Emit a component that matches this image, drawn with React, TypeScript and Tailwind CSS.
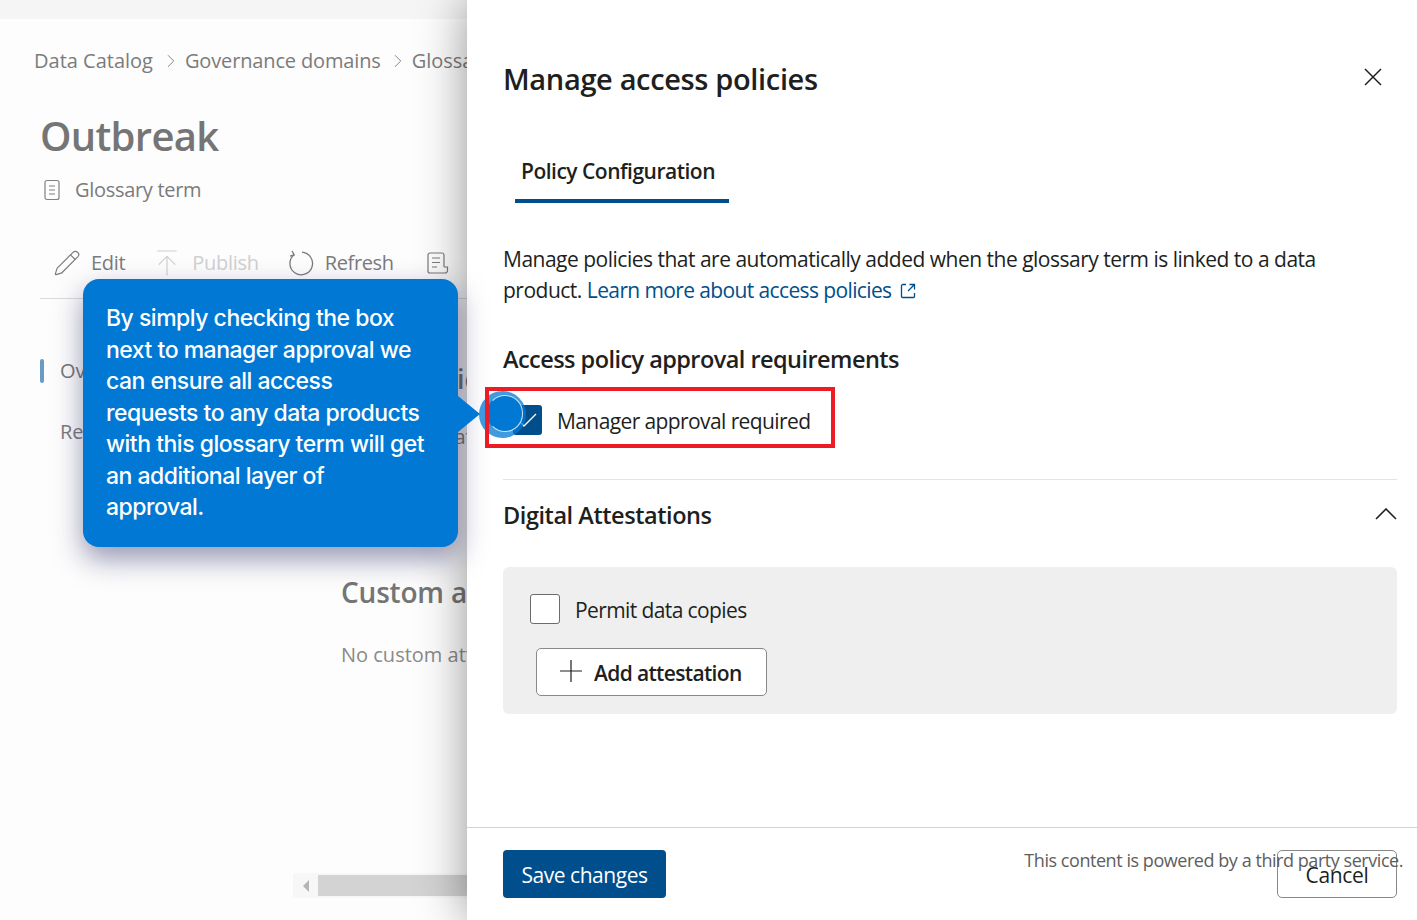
import { ChevronRight, Pencil, ArrowUpToLine } from "lucide-react";

function GlossaryIcon() {
  return (
    <svg width="16" height="22" viewBox="0 0 16 22" fill="none" stroke="#808080" strokeWidth="1.2">
      <rect x="1" y="1.5" width="14" height="19" rx="2" />
      <path d="M5 7h6M5 11h6M5 15h6" />
    </svg>
  );
}

function RefreshIcon() {
  return (
    <svg width="26" height="26" viewBox="0 0 26 26" fill="none" stroke="#7b7b7b" strokeWidth="1.3" className="ml-[29px] shrink-0">
      <path d="M14 2.2a11.3 11.3 0 1 1-8 2.6" />
      <path d="M4 1l2.2 3.9L2 6.2" />
    </svg>
  );
}

function TermDocIcon() {
  return (
    <svg width="22" height="22" viewBox="0 0 22 22" fill="none" stroke="#7b7b7b" strokeWidth="1.2" className="ml-[33px] shrink-0">
      <path d="M17 15V3a2 2 0 0 0-2-2H3a2 2 0 0 0-2 2v16a2 2 0 0 0 2 2h15a2.5 2.5 0 0 0 2.5-2.5V15H17" />
      <path d="M5 6h8M5 10.500h8M5 15h5" />
    </svg>
  );
}

function LeftPanel() {
  return (
    <div className="flex flex-col w-[467px] h-full shrink-0 overflow-hidden bg-[#fdfdfd] font-['Open_Sans',sans-serif]">
      <div className="h-[19px] bg-[#f5f5f5]" />
      <div className="flex items-center pl-[34px] mt-[27px] h-[30px] text-[20px] text-[#7b7b7b] whitespace-nowrap">
        <span>Data Catalog</span>
        <ChevronRight size={22} strokeWidth={1} className="ml-[7px] mr-[3px] shrink-0" />
        <span className="tracking-[-0.15px]">Governance domains</span>
        <ChevronRight size={22} strokeWidth={1} className="ml-[6px] mr-[3px] shrink-0" />
        <span>Glossary terms</span>
      </div>
      <h1 className="pl-[40px] mt-[35px] h-[50px] leading-[50px] text-[40px] font-semibold text-[#757575] tracking-[-0.7px]">Outbreak</h1>
      <div className="flex items-center gap-[15px] pl-[44px] mt-[15px] h-[28px] text-[20px] text-[#7b7b7b] tracking-[-0.3px]">
        <GlossaryIcon />
        <span>Glossary term</span>
      </div>
      <div className="flex items-center pl-[53px] mt-[41px] h-[36px] text-[20px] text-[#7b7b7b] whitespace-nowrap tracking-[-0.3px]">
        <Pencil size={28} strokeWidth={1} className="shrink-0" />
        <span className="ml-[10px]">Edit</span>
        <ArrowUpToLine size={32} strokeWidth={0.9} className="ml-[26px] shrink-0 text-[#d0d0d0]" />
        <span className="ml-[9px] text-[#d0d0d0]">Publish</span>
        <RefreshIcon />
        <span className="ml-[11px] tracking-[-0.35px]">Refresh</span>
        <TermDocIcon />
      </div>
      <div className="ml-[40px] mt-[17px] border-t border-[#dcdcdc]" />
      <div className="flex mt-[60px]">
        <div className="w-[341px] shrink-0 pl-[40px]">
          <div className="flex items-center gap-[16px] h-[24px] text-[20px] text-[#757575]">
            <div className="w-[4px] h-[24px] rounded-sm bg-[#6a9bc3]" />
            <span>Overview</span>
          </div>
          <div className="pl-[20px] mt-[34px] text-[20px] text-[#7b7b7b]">Related</div>
        </div>
        <div className="whitespace-nowrap">
          <div className="text-[27px] font-semibold text-[#757575] leading-[40px]">Term policy</div>
          <div className="text-[20px] text-[#7b7b7b] mt-[23px] tracking-[-0.2px]">No related data</div>
          <div className="text-[28px] font-semibold text-[#757575] leading-[40px] mt-[120px] tracking-[-0.2px]">Custom attributes</div>
          <div className="text-[20px] text-[#8a8a8a] mt-[28px]">No custom attributes</div>
        </div>
      </div>
      <div className="flex h-[25px] mt-auto mb-[22px] ml-[293px] bg-[#f7f7f7] items-center">
        <div className="w-[25px] flex justify-center">
          <div className="w-0 h-0 border-y-[6px] border-y-transparent border-r-[6px] border-r-[#b5b5b5]" />
        </div>
        <div className="flex-1 h-[21px] bg-[#d3d3d3]" />
      </div>
    </div>
  );
}

function RightPanel() {
  return (
    <div className="relative z-10 flex-1 h-full flex flex-col bg-white text-[#201f1e] shadow-[0_0_45px_rgba(0,0,0,0.42)] font-['Open_Sans',sans-serif]">
      <div className="flex-1 pl-[36px] pr-[20px]">
        <div className="flex items-center justify-between h-[40px] mt-[59px] pr-[15px]">
          <h2 className="text-[29px] font-semibold tracking-[-0.35px]">Manage access policies</h2>
          <svg width="18" height="18" viewBox="0 0 18 18" stroke="#201f1e" strokeWidth="1.5" className="-mt-[4px]">
            <path d="M1 1l16 16M17 1L1 17" />
          </svg>
        </div>
        <div className="mt-[41px] ml-[12px] w-[214px] h-[63px] border-b-[4px] border-[#004e8c] pl-[6px] text-[21px] font-semibold tracking-[-0.5px] leading-[62px]">
          Policy Configuration
        </div>
        <p className="mt-[41px] text-[21px] leading-[31px] tracking-[-0.5px] whitespace-nowrap">
          Manage policies that are automatically added when the glossary term is linked to a data
          <br />
          product.{" "}
          <span className="text-[#004e8c] tracking-[-0.62px]">Learn more about access policies</span>
          <svg width="16" height="16" viewBox="0 0 16 16" fill="none" stroke="#004e8c" strokeWidth="1.3" className="inline ml-[8px] -mt-[3px]">
            <path d="M6 1.500H2.500a1.500 1.500 0 0 0-1 1V13.500a1 1 0 0 0 1 1h11a1 1 0 0 0 1-1V10" />
            <path d="M9.500 1.500h5v5M14.500 1.500L8 8" />
          </svg>
        </p>
        <h3 className="mt-[37px] text-[23.5px] font-semibold tracking-[-0.55px] leading-[32px]">Access policy approval requirements</h3>
        <div className="flex items-center gap-[15px] mt-[30px] ml-[10px] h-[30px]">
          <div className="w-[29px] h-[30px] rounded-[3px] bg-[#004e8c] flex items-center justify-center">
            <svg width="20" height="14" viewBox="0 0 20 14" fill="none" stroke="#ffffff" strokeWidth="1.4" className="-ml-[2px]">
              <path d="M1 7l6 6L19 1" />
            </svg>
          </div>
          <span className="text-[21px] tracking-[-0.6px] pt-[3px]">Manager approval required</span>
        </div>
        <div className="mt-[44px] border-t border-[#e3e3e3]" />
        <div className="flex items-center justify-between h-[36px] mt-[18px]">
          <h3 className="text-[23.5px] font-semibold tracking-[-0.45px]">Digital Attestations</h3>
          <svg width="22" height="12" viewBox="0 0 22 12" fill="none" stroke="#201f1e" strokeWidth="1.6" className="-mt-[4px]">
            <path d="M1 11L11 1l10 10" />
          </svg>
        </div>
        <div className="mt-[33px] h-[147px] rounded-[6px] bg-[#efefef] pl-[27px] pt-[25px]">
          <div className="flex items-center gap-[15px]">
            <div className="w-[30px] h-[30px] rounded-[3px] bg-white border border-[#6b6b6b]" />
            <span className="text-[21px] tracking-[-0.6px] pt-[3px]">Permit data copies</span>
          </div>
          <button className="flex items-center mt-[21px] ml-[6px] w-[231px] h-[48px] rounded-[5px] bg-white border border-[#8a8886] pl-[23px] text-[21px] font-semibold tracking-[-0.65px]">
            <svg width="22" height="22" viewBox="0 0 22 22" stroke="#201f1e" strokeWidth="1.2" className="shrink-0 -mt-[2px]">
              <path d="M11 0v22M0 11h22" />
            </svg>
            <span className="ml-[12px] pt-[4px]">Add attestation</span>
          </button>
        </div>
      </div>
      <div className="relative h-[93px] shrink-0 border-t border-[#d2d2d2] flex items-start justify-between pl-[36px] pr-[20px] pt-[22px]">
        <button className="w-[163px] h-[48px] rounded-[4px] bg-[#004e8c] text-white text-[21px] tracking-[-0.45px] pt-[4px]">Save changes</button>
        <button className="w-[120px] h-[48px] rounded-[5px] border border-[#8a8886] text-[21px] tracking-[-0.35px] pt-[4px]">Cancel</button>
        <div className="absolute right-[14px] top-[19px] text-[18px] text-[#605e5c] tracking-[-0.45px] whitespace-nowrap">
          This content is powered by a third party service.
        </div>
      </div>
    </div>
  );
}

export default function App() {
  return (
    <div className="relative flex w-[1417px] h-[920px] overflow-hidden bg-white">
      <LeftPanel />
      <RightPanel />
      {/* coach mark over the panels */}
      <div className="absolute z-20 left-[83px] top-[279px] w-[375px] h-[268px] rounded-[16px] bg-[#0078d4] pl-[23px] pt-[24px] text-[23px] leading-[31.5px] tracking-[-0.5px] font-medium text-white font-['Inter',sans-serif] whitespace-nowrap shadow-[0_12px_28px_rgba(50,50,110,0.5)]">
        By simply checking the box
        <br />
        next to manager approval we
        <br />
        can ensure all access
        <br />
        requests to any data products
        <br />
        with this glossary term will get
        <br />
        an additional layer of
        <br />
        approval.
      </div>
      <div className="absolute z-20 left-[458px] top-[396px] w-0 h-0 border-y-[18px] border-y-transparent border-l-[22px] border-l-[#0078d4]" />
      <div className="absolute z-20 left-[479px] top-[391px] w-[47px] h-[47px] rounded-full bg-[#0078d4]/75" />
      <div className="absolute z-20 left-[487px] top-[395px] w-[36px] h-[37px] rounded-full bg-[#0078d4] border border-white/80 border-l-transparent" />
      <div className="absolute z-30 left-[485px] top-[387px] w-[350px] h-[61px] border-[4px] border-[#ed1c24]" />
    </div>
  );
}
